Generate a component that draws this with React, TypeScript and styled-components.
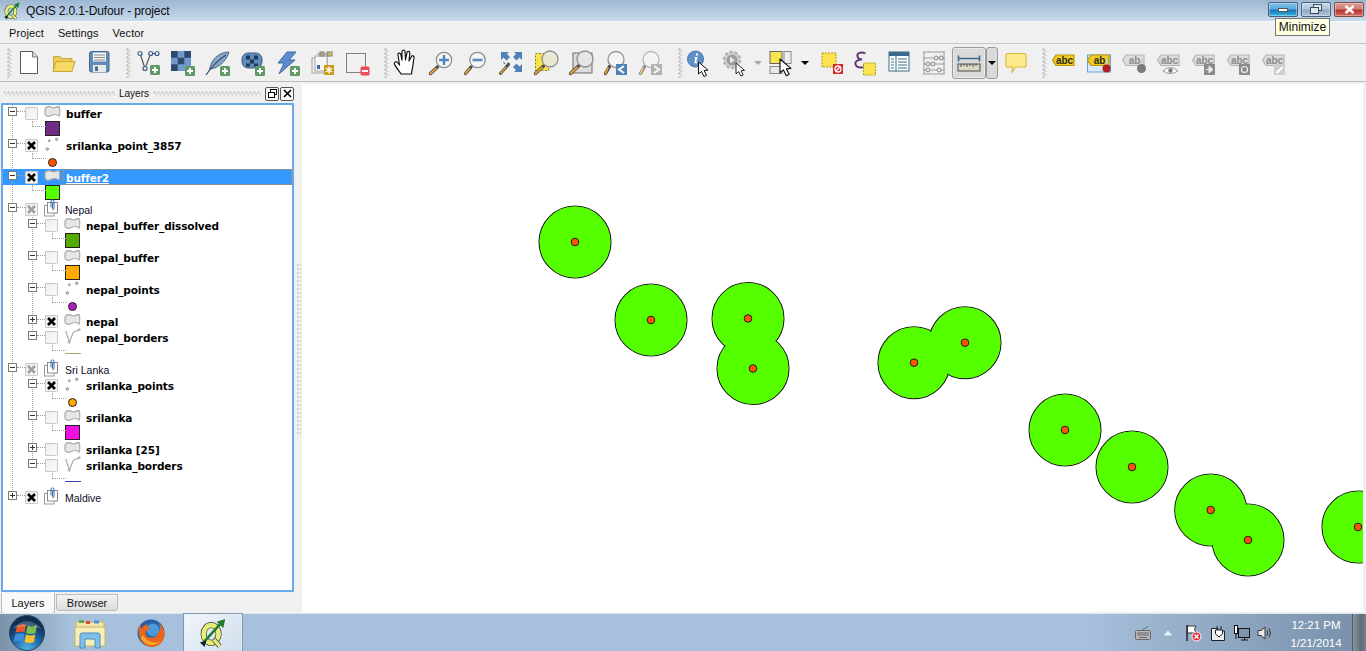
import React from "react";
import styled, { createGlobalStyle } from "styled-components";

const UI_FONT = `"Liberation Sans", Arial, sans-serif`;
const BOLD_FONT = `"DejaVu Sans", Verdana, sans-serif`;

const GlobalStyle = createGlobalStyle`
  html, body { margin: 0; padding: 0; background: #f0f0f0; }
  body { font-family: ${UI_FONT}; overflow: hidden; }
`;

/* ---------- window chrome ---------- */

const Screen = styled.div`
  width: 1366px;
  height: 651px;
  display: flex;
  flex-direction: column;
  overflow: hidden;
  background: #f0f0f0;
  position: relative;
`;

const TitleBar = styled.div`
  height: 21px;
  flex: none;
  display: flex;
  align-items: center;
  padding-left: 3px;
  border-bottom: 1px solid #f6f9fc;
  background: linear-gradient(180deg, #9db7d2 0%, #c9daeb 100%);
`;

const TitleText = styled.span`
  font-size: 12px;
  margin-left: 5px;
  color: #0c0c14;
  letter-spacing: -0.12px;
`;

const WindowButtons = styled.div`
  margin-left: auto;
  margin-right: 2px;
  margin-top: 2px;
  align-self: flex-start;
  display: flex;
  gap: 3px;
`;

const WinButton = styled.div<{ $kind: "min" | "max" | "close" }>`
  width: 30px;
  height: 15px;
  box-sizing: border-box;
  border: 1px solid ${(p) => (p.$kind === "close" ? "#7d4a48" : "#47617c")};
  border-radius: 2px;
  display: flex;
  align-items: center;
  justify-content: center;
  box-shadow: inset 0 0 0 1px rgba(255, 255, 255, 0.35);
  background: ${(p) =>
    p.$kind === "min"
      ? "linear-gradient(180deg,#7cc3ec 0%,#5aa9dc 45%,#1a76b8 55%,#35b3e0 100%)"
      : p.$kind === "max"
      ? "linear-gradient(180deg,#c4d6e8 0%,#b0c6dc 45%,#8ea9c6 55%,#a9c1d8 100%)"
      : "linear-gradient(180deg,#dc9c94 0%,#cf7f76 45%,#b9352c 55%,#cf6d62 100%)"};
`;

const Tooltip = styled.div`
  position: absolute;
  left: 1275px;
  top: 18px;
  width: 55px;
  height: 18px;
  box-sizing: border-box;
  border: 1px solid #767676;
  background: #ffffe1;
  font-size: 12px;
  line-height: 16px;
  text-align: center;
  color: #111;
  z-index: 5;
`;

const MenuBar = styled.div`
  height: 21px;
  flex: none;
  display: flex;
  align-items: center;
  padding-left: 9px;
  gap: 14px;
  font-size: 11px;
  color: #111;
`;

const MenuItem = styled.span`
  letter-spacing: 0.1px;
`;

/* ---------- toolbar ---------- */

const Toolbar = styled.div`
  height: 37px;
  flex: none;
  display: flex;
  align-items: center;
  border-top: 1px solid #c6c6c6;
  border-bottom: 1px solid #bcbcbc;
`;

const GripWrap = styled.div<{ $w: number }>`
  width: ${(p) => p.$w}px;
  height: 30px;
  flex: none;
  display: flex;
  justify-content: flex-end;
`;

const Grip = styled.div`
  width: 5px;
  height: 100%;
  background-image: radial-gradient(circle at 1.5px 1.5px, #c8c8c8 1.2px, transparent 1.5px),
    radial-gradient(circle at 3.5px 3.5px, #d2d2d2 1.1px, transparent 1.4px);
  background-size: 5px 4px;
`;

const ToolButton = styled.div<{ $w: number; $active?: boolean }>`
  width: ${(p) => p.$w}px;
  height: 32px;
  flex: none;
  box-sizing: border-box;
  display: flex;
  align-items: center;
  justify-content: center;
  border-radius: 3px;
  ${(p) =>
    p.$active
      ? "background:#dadada;border:1px solid #9a9a9a;box-shadow:inset 0 0 0 1px #ececec;"
      : ""}
`;

const ArrowSlot = styled.div<{ $w: number; $after?: number; $boxed?: boolean }>`
  width: ${(p) => p.$w}px;
  margin-right: ${(p) => p.$after ?? 0}px;
  height: 32px;
  flex: none;
  box-sizing: border-box;
  display: flex;
  align-items: center;
  justify-content: center;
  ${(p) =>
    p.$boxed ? "background:#dadada;border:1px solid #9a9a9a;border-radius:3px;" : ""}
`;

const Arrow = styled.div<{ $dim?: boolean }>`
  flex: none;
  width: 0;
  height: 0;
  border-left: 4px solid transparent;
  border-right: 4px solid transparent;
  border-top: 4px solid ${(p) => (p.$dim ? "#a9a9a9" : "#000")};
`;

const IconSvg = styled.svg`
  width: 32px;
  height: 32px;
  flex: none;
  overflow: visible;
`;

const Plus = ({ x = 23, y = 23 }: { x?: number; y?: number }) => (
  <g>
    <rect x={x - 5} y={y - 5} width="10" height="10" rx="1.5" fill="#5f9a66" />
    <path d={`M${x - 3} ${y}h6M${x} ${y - 3}v6`} stroke="#fff" strokeWidth="2" />
  </g>
);

const Glass = ({ cx = 19, cy = 13, r = 7.7, fill = "#f6f6f6" }) => (
  <g>
    <path d={`M${cx - 6.5} ${cy + 7}L5.5 26.5`} stroke="#4a4a4a" strokeWidth="3.4" strokeLinecap="round" />
    <path d={`M${cx - 8} ${cy + 8.5}L5.5 26.5`} stroke="#e8a52c" strokeWidth="1.8" strokeLinecap="round" />
    <circle cx={cx} cy={cy} r={r} fill={fill} stroke="#8f8f8f" strokeWidth="1.3" />
  </g>
);

const Cursor = ({ x, y, s = 1 }: { x: number; y: number; s?: number }) => (
  <path
    transform={`translate(${x} ${y}) scale(${s})`}
    d="M0 0L0 12L3 9.5L5.5 14.5L8 13.3L5.6 8.6L9.5 8.2Z"
    fill="#fff"
    stroke="#111"
    strokeWidth="1"
    strokeLinejoin="round"
  />
);

const LabelTag = ({
  text = "abc",
  fill = "#ddd",
  edge = "#b5b5b5",
  ink = "#8a8a8a",
  y = 8,
}) => (
  <g>
    <path d={`M8 ${y}H26V${y + 10.5}H8L4.5 ${y + 5.2}Z`} fill={fill} stroke={edge} strokeWidth="1.2" />
    <text x="16.5" y={y + 8.5} textAnchor="middle" fontFamily={UI_FONT} fontWeight="700" fontSize="10" fill={ink}>
      {text}
    </text>
  </g>
);

const icons: Record<string, React.ReactNode> = {
  new: (
    <>
      <path d="M7.5 4.5H19.5L24.5 10V26.5H7.5Z" fill="#fff" stroke="#585858" />
      <path d="M19.5 4.5V10H24.5" fill="#ddd" stroke="#777" />
    </>
  ),
  open: (
    <>
      <path d="M5.5 23V9.5H12L14 11.5H24V14" fill="#f0cc55" stroke="#c7a63e" />
      <path d="M5 24.5L8 14.5H27L24 24.5Z" fill="#f6d864" stroke="#c7a63e" />
    </>
  ),
  save: (
    <>
      <rect x="6.5" y="4.5" width="19.5" height="20.5" rx="2" fill="#5f8cbb" stroke="#44678d" />
      <rect x="10" y="5.5" width="13" height="9" fill="#f3f3f3" />
      <path d="M11 8h11M11 10.5h11M11 13h11" stroke="#8c8c8c" />
      <rect x="10" y="18" width="13" height="7" fill="#e9e9e9" />
      <rect x="12" y="19.5" width="3" height="4.5" fill="#44678d" />
    </>
  ),
  addVector: (
    <>
      <path d="M8 6.5L13 21.5L18.7 6.5H25" fill="none" stroke="#555" strokeWidth="1.2" />
      <g fill="#e8eef5" stroke="#3e5f86" strokeWidth="1.2">
        <circle cx="8" cy="6.5" r="2" />
        <circle cx="13" cy="21.5" r="2" />
        <circle cx="18.7" cy="6.5" r="2" />
        <circle cx="25" cy="6.5" r="2" />
      </g>
      <Plus />
    </>
  ),
  addRaster: (
    <>
      <rect x="4" y="4" width="20" height="20" fill="#6f9acb" />
      <path d="M4 4h6.7v6.7H4zM17.3 4H24v6.7h-6.7zM10.7 10.7h6.6v6.6h-6.6zM4 17.3h6.7V24H4z" fill="#2e4a6e" />
      <Plus y={24} />
    </>
  ),
  feather: (
    <>
      <path d="M27 5C19 5 11 10 8.5 19L7.5 22C14 22 24 16 27 5Z" fill="#86a7ca" stroke="#4e6f94" />
      <path d="M4 28C8 22 16 13 24 8" fill="none" stroke="#3a4f68" strokeWidth="1.2" />
      <Plus y={24} />
    </>
  ),
  postgis: (
    <>
      <rect x="5" y="6" width="20" height="15" rx="6" fill="#5f8cbb" stroke="#3e5f86" />
      <path d="M9 8.5h4v4H9zM17 8.5h4v4h-4zM13 12.5h4v4h-4zM9 16.5h4v3H9zM17 16.5h4v3h-4z" fill="#223a5a" />
      <Plus y={24} />
    </>
  ),
  wcs: (
    <>
      <path d="M15 5L24 5L17 13L23 13L7 27L12 16L6 16Z" fill="#5f8cd0" stroke="#3f6a9e" strokeLinejoin="round" />
      <Plus y={24} />
    </>
  ),
  wms: (
    <>
      <rect x="5" y="11" width="15" height="15" fill="#efefef" stroke="#a3a3a3" />
      <rect x="8" y="9" width="12" height="15" fill="#f6f6f6" stroke="#a3a3a3" />
      <path d="M10 18h3v4h-3z" fill="#3f6a9e" />
      <rect x="13" y="5" width="4" height="4" fill="#c9d27a" stroke="#777" />
      <rect x="20" y="5" width="5" height="4" fill="#e6d35a" stroke="#777" />
      <path d="M10 7h13" stroke="#888" />
      <rect x="17" y="18" width="10" height="10" rx="1" fill="#cc9a12" />
      <path d="M22 19.5v7M18.8 21l6.4 4M18.8 25l6.4-4" stroke="#fff" strokeWidth="1.4" />
    </>
  ),
  remove: (
    <>
      <rect x="4.5" y="6.5" width="19" height="19" fill="#f0f0f0" stroke="#7f7f7f" />
      <rect x="18.5" y="19.5" width="9" height="9" rx="1.5" fill="#ee4a58" />
      <path d="M20 24h6" stroke="#fff" strokeWidth="2" />
    </>
  ),
  hand: (
    <path
      d="M11 27C9 24 5 19 4.5 17C4 15 6 14 7.5 15.5L9.5 18L8 8C7.6 6 10.3 5.4 10.8 7.4L12 13L12 4.5C12 2.5 15 2.5 15 4.5L15.5 13L17 5.5C17.5 3.7 20 4.2 19.8 6.2L19 14L21.5 9.5C22.5 8 24.5 9 24 11C23 16 23 20 22 23L21.5 27Z"
      fill="#fff"
      stroke="#111"
      strokeWidth="1.2"
      strokeLinejoin="round"
    />
  ),
  zoomIn: (
    <>
      <Glass />
      <path d="M14 13h10M19 8v10" stroke="#4f86bd" strokeWidth="2.4" />
    </>
  ),
  zoomOut: (
    <>
      <Glass cx={17.5} />
      <path d="M12.5 13h10" stroke="#5f8cbb" strokeWidth="2.6" />
    </>
  ),
  zoomFull: (
    <>
      <g fill="#4f82b8">
        <path d="M6 5h8l-2 2 3 3-3.5 3.5-3-3-2.5 2.5z" />
        <path d="M27 5h-8l2 2-3 3 3.5 3.5 3-3 2.5 2.5z" />
        <path d="M27 25h-8l2-2-3-3 3.5-3.5 3 3 2.5-2.5z" />
        <path d="M8 14l2.5 2.5-1.5 1z" />
      </g>
      <path d="M13 18L5.5 26.5" stroke="#4a4a4a" strokeWidth="3" strokeLinecap="round" />
      <path d="M11 20L5.5 26.5" stroke="#e8a52c" strokeWidth="1.6" />
      <circle cx="13.5" cy="17" r="1.6" fill="#555" />
    </>
  ),
  zoomSel: (
    <>
      <rect x="5.5" y="6.5" width="13" height="17" fill="#f8e44a" stroke="#8c7a20" strokeDasharray="2 1.5" />
      <Glass cx={20} cy={12} r={8} fill="#e8e7d2" />
    </>
  ),
  zoomLayer: (
    <>
      <rect x="8" y="6" width="19" height="20" fill="#dcdcdc" stroke="#6b6b6b" />
      <Glass cx={20} cy={12} r={8} fill="#e6e6e8" />
    </>
  ),
  zoomLast: (
    <>
      <Glass cx={16} cy={12.5} r={8} />
      <rect x="16" y="17" width="11" height="11" fill="#4f82b8" />
      <path d="M24 19L19 22.5L24 26" fill="none" stroke="#fff" strokeWidth="2" />
    </>
  ),
  zoomNext: (
    <g opacity="0.6">
      <Glass cx={16} cy={12.5} r={8} />
      <rect x="16" y="17" width="11" height="11" fill="#8a8a8a" />
      <path d="M19 19L24 22.5L19 26" fill="none" stroke="#fff" strokeWidth="2" />
    </g>
  ),
  identify: (
    <>
      <circle cx="11.5" cy="12" r="8" fill="#5f8fc6" stroke="#4a78ac" />
      <path d="M12 6.5h2v2h-2zM11 10h2.5l-1.2 5h1l-.3 1.2H10.2l1.1-5H10.4z" fill="#fff" />
      <Cursor x={14.5} y={15} />
    </>
  ),
  action: (
    <>
      <circle cx="12" cy="13" r="8" fill="#d4d4d4" stroke="#b0b0b0" strokeWidth="2.4" strokeDasharray="3.2 1.8" />
      <circle cx="12" cy="13" r="5.5" fill="#9d9d9d" />
      <path d="M10 10L15 13L10 16Z" fill="#ececec" />
      <Cursor x={16} y={16} s={0.9} />
    </>
  ),
  select: (
    <>
      <rect x="4" y="4.5" width="12" height="12" fill="#fbe44f" stroke="#666" />
      <rect x="18" y="4.5" width="7" height="12" fill="#eee" stroke="#888" />
      <rect x="4" y="19.5" width="12" height="7" fill="#e6e6e6" stroke="#888" />
      <Cursor x={14} y={12} s={1.15} />
    </>
  ),
  deselect: (
    <>
      <rect x="6" y="6" width="14" height="14" fill="#fbe44f" stroke="#b39a20" strokeDasharray="2 1" />
      <rect x="17" y="17" width="10" height="10" fill="#d8242c" />
      <circle cx="22" cy="22" r="3" fill="none" stroke="#fff" strokeWidth="1.3" />
      <path d="M20 24l4-4" stroke="#fff" strokeWidth="1.3" />
    </>
  ),
  expression: (
    <>
      <path d="M15.5 6.5C11 4.5 6.5 6 7.5 9.5C8 11.5 9.5 12.5 12 12.5C8.5 12.5 4.5 14 5.5 17.5C6.5 21 12 21 15.5 19.5" fill="none" stroke="#61366f" strokeWidth="1.9" />
      <rect x="13.5" y="16" width="12" height="12" fill="#fbe44f" stroke="#b39a20" strokeDasharray="2 1" />
    </>
  ),
  table: (
    <>
      <rect x="5" y="5" width="20" height="19" fill="#fff" stroke="#3d6a8c" />
      <rect x="5" y="5" width="20" height="4" fill="#3d6a8c" />
      <path d="M12 9v15M7 12h3M14 12h9M7 15h3M14 15h9M7 18h3M14 18h9M7 21h3M14 21h9" stroke="#3d6a8c" />
    </>
  ),
  abacus: (
    <>
      <path d="M6 5v22M26 5v22M5 5h22M5 27h22M5 11h22M5 17h22M5 23h22" stroke="#9a9a9a" fill="none" />
      <g fill="#e8e8e8" stroke="#8a8a8a">
        <circle cx="18" cy="11" r="2" />
        <circle cx="23" cy="11" r="2" />
        <circle cx="10" cy="17" r="2" />
        <circle cx="15" cy="17" r="2" />
        <circle cx="10" cy="23" r="2" />
        <circle cx="21" cy="23" r="2" />
      </g>
    </>
  ),
  measure: (
    <>
      <path d="M5 11.5h22M5.5 8.5v6M26.5 8.5v6" stroke="#3d6a8c" strokeWidth="1.6" fill="none" />
      <rect x="5" y="17" width="22" height="7" fill="#dcd7c6" stroke="#4b4b4b" />
      <path d="M8 17v3M11 17v2M14 17v3M17 17v2M20 17v3M23 17v2" stroke="#4b4b4b" />
    </>
  ),
  speech: (
    <path
      d="M8 6.5H24Q26 6.5 26 8.5V18Q26 20 24 20H15.5L12 25L12.5 20H8Q6 20 6 18V8.5Q6 6.5 8 6.5Z"
      fill="#fdeb8e"
      stroke="#d9b93c"
      strokeWidth="1.2"
    />
  ),
  label: <LabelTag fill="#f1cc20" edge="#b8960e" ink="#2b2b20" y={8} />,
  labelPin: (
    <>
      <rect x="4.5" y="8" width="23" height="17" fill="#d8e8f8" stroke="#6aa0e0" />
      <LabelTag text="ab" fill="#f1cc20" edge="#b8960e" ink="#2b2b20" y={8} />
      <path d="M23.5 12v7" stroke="#c9c9c9" strokeWidth="2" />
      <circle cx="23.5" cy="21.5" r="4" fill="#b01c24" />
    </>
  ),
  labelMove: (
    <>
      <LabelTag text="ab" />
      <path d="M23.5 12v7" stroke="#c9c9c9" strokeWidth="2" />
      <circle cx="23.5" cy="21.5" r="4.5" fill="#7b7b7b" />
    </>
  ),
  labelEye: (
    <>
      <LabelTag />
      <path d="M10 24Q17 17 25 24Q17 29 10 24Z" fill="#fff" stroke="#9a9a9a" />
      <circle cx="17.5" cy="23.5" r="2.2" fill="#777" />
    </>
  ),
  labelMoveBox: (
    <>
      <LabelTag />
      <rect x="16" y="17" width="11" height="11" fill="#8b8b8b" />
      <path d="M18 22.5h4M21 19l4 3.5-4 3.5z" fill="#eee" stroke="#eee" />
    </>
  ),
  labelRotate: (
    <>
      <LabelTag />
      <rect x="16" y="17" width="11" height="11" fill="#8b8b8b" />
      <circle cx="21.5" cy="22.5" r="3" fill="none" stroke="#eee" strokeWidth="1.2" />
    </>
  ),
  labelEdit: (
    <>
      <LabelTag />
      <rect x="16" y="17" width="11" height="11" fill="#cfcfcf" />
      <path d="M18.5 26L24.5 20" stroke="#fff" strokeWidth="2" />
    </>
  ),
};

const Tool = ({ name }: { name: string }) => <IconSvg viewBox="0 0 32 32">{icons[name]}</IconSvg>;

type ToolItem =
  | { grip: number }
  | { arrow: number; after?: number; dim?: boolean; boxed?: boolean }
  | { icon: string; w?: number; active?: boolean };

const toolItems: ToolItem[] = [
  { grip: 11.5 },
  { icon: "new" },
  { icon: "open" },
  { icon: "save" },
  { grip: 14 },
  { icon: "addVector" },
  { icon: "addRaster" },
  { icon: "feather" },
  { icon: "postgis" },
  { icon: "wcs" },
  { icon: "wms" },
  { icon: "remove" },
  { grip: 13 },
  { icon: "hand" },
  { icon: "zoomIn" },
  { icon: "zoomOut" },
  { icon: "zoomFull" },
  { icon: "zoomSel" },
  { icon: "zoomLayer" },
  { icon: "zoomLast" },
  { icon: "zoomNext" },
  { grip: 14 },
  { icon: "identify" },
  { icon: "action", w: 36 },
  { arrow: 8, dim: true },
  { icon: "select", w: 40 },
  { arrow: 6, after: 8 },
  { icon: "deselect", w: 33 },
  { icon: "expression" },
  { icon: "table", w: 32 },
  { icon: "abacus", w: 36 },
  { icon: "measure", w: 34, active: true },
  { arrow: 12, boxed: true },
  { icon: "speech", w: 37 },
  { grip: 12 },
  { icon: "label" },
  { icon: "labelPin" },
  { icon: "labelMove" },
  { icon: "labelEye" },
  { icon: "labelMoveBox" },
  { icon: "labelRotate" },
  { icon: "labelEdit" },
];

/* ---------- layer tree ---------- */

const Main = styled.div`
  flex: 1;
  min-height: 0;
  display: flex;
`;

const LeftColumn = styled.div`
  width: 293px;
  margin-left: 1px;
  flex: none;
  display: flex;
  flex-direction: column;
  padding-top: 2px;
`;

const DockHeader = styled.div`
  height: 19px;
  flex: none;
  display: flex;
  align-items: center;
  gap: 4px;
  padding-left: 2px;
  padding-right: 2px;
  font-size: 10px;
  color: #111;
`;

const DockTitle = styled.span`
  width: 30px;
  text-align: center;
`;

const DockGrip = styled.div<{ $w: number }>`
  width: ${(p) => p.$w}px;
  height: 5px;
  flex: none;
  background-image: radial-gradient(circle at 1.5px 1.5px, #cfcfcf 1px, transparent 1.4px),
    radial-gradient(circle at 3.5px 3.5px, #d8d8d8 1px, transparent 1.4px);
  background-size: 4px 5px;
`;

const DockButtons = styled.div`
  margin-left: auto;
  display: flex;
  gap: 1px;
`;

const DockButton = styled.div`
  width: 14px;
  height: 14px;
  flex: none;
  box-sizing: border-box;
  border: 1px solid #555;
  border-radius: 2px;
  background: #f7f7f7;
  display: flex;
  align-items: center;
  justify-content: center;
`;

const TreeBox = styled.div`
  flex: 1;
  min-height: 0;
  box-sizing: border-box;
  border: 2px solid #68a7ea;
  border-radius: 1px;
  background: #fff;
`;

const Row = styled.div<{ $selected?: boolean }>`
  height: 16px;
  display: flex;
  align-items: center;
  background: ${(p) => (p.$selected ? "#3399ff" : "transparent")};
`;

const Guide = styled.div<{ $on: boolean }>`
  width: 20px;
  flex: none;
  align-self: stretch;
  box-sizing: border-box;
  background-image: ${(p) =>
    p.$on ? "linear-gradient(#a0a0a0 50%, transparent 50%)" : "none"};
  background-size: 1px 2px;
  background-repeat: repeat-y;
  background-position: 9px 0;
`;

const ExpanderCell = styled.div<{ $line: "full" | "top" }>`
  width: 22px;
  flex: none;
  align-self: stretch;
  display: flex;
  align-items: center;
  padding-left: 5px;
  box-sizing: border-box;
  position: relative;
  &::before {
    content: "";
    position: absolute;
    left: 9px;
    top: 0;
    width: 1px;
    height: ${(p) => (p.$line === "full" ? "100%" : "50%")};
    background-image: linear-gradient(#a0a0a0 50%, transparent 50%);
    background-size: 1px 2px;
  }
`;

const Expander = styled.div`
  width: 9px;
  height: 9px;
  margin-top: -3px;
  flex: none;
  box-sizing: border-box;
  border: 1px solid #7a7a7a;
  background: #fff;
  display: flex;
  align-items: center;
  justify-content: center;
  position: relative;
`;

const Stub = styled.div`
  flex: 1;
  height: 0;
  margin-top: -3px;
  border-top: 1px dotted #a0a0a0;
`;

const CheckBox = styled.div`
  width: 13px;
  height: 13px;
  flex: none;
  box-sizing: border-box;
  border: 1px solid #c9c9c9;
  border-radius: 1px;
  background: linear-gradient(135deg, #ececec, #fbfbfb);
  display: flex;
  align-items: center;
  justify-content: center;
`;

const LayerIcon = styled.svg`
  width: 16px;
  height: 14px;
  margin-left: 6px;
  margin-top: -2px;
  flex: none;
  overflow: visible;
`;

const LayerName = styled.div<{ $bold?: boolean; $selected?: boolean }>`
  margin-left: ${(p) => (p.$selected ? 3 : p.$bold ? 6 : 5)}px;
  margin-top: ${(p) => (p.$selected ? 0 : 2)}px;
  padding-left: ${(p) => (p.$selected ? 3 : 0)}px;
  font-family: ${(p) => (p.$bold ? BOLD_FONT : UI_FONT)};
  font-size: 10.5px;
  line-height: 14px;
  font-weight: ${(p) => (p.$bold ? 700 : 400)};
  letter-spacing: ${(p) => (p.$bold ? "-0.12px" : "0")};
  color: ${(p) => (p.$selected ? "#fff" : p.$bold ? "#000" : "#0c0c2a")};
  ${(p) =>
    p.$selected
      ? "flex:1;align-self:stretch;outline:1px dotted #e08a30;outline-offset:-1px;padding-top:2px;text-decoration:underline;"
      : ""}
`;

const Elbow = styled.div`
  width: 22px;
  flex: none;
  align-self: stretch;
  position: relative;
  &::before {
    content: "";
    position: absolute;
    left: 9px;
    top: 0;
    width: 13px;
    height: 5px;
    border-left: 1px dotted #a0a0a0;
    border-bottom: 1px dotted #a0a0a0;
  }
`;

const SymbolSquare = styled.div<{ $color: string }>`
  width: 15px;
  height: 15px;
  margin-top: -1px;
  flex: none;
  box-sizing: border-box;
  border: 1px solid #222;
  background: ${(p) => p.$color};
`;

const SymbolDot = styled.div<{ $color: string }>`
  width: 9px;
  height: 9px;
  margin-left: 3px;
  margin-top: 2px;
  flex: none;
  box-sizing: border-box;
  border: 1px solid #222;
  border-radius: 50%;
  background: ${(p) => p.$color};
`;

const SymbolLine = styled.div<{ $color: string }>`
  width: 16px;
  height: 1px;
  flex: none;
  background: ${(p) => p.$color};
`;

const PolyIcon = () => (
  <LayerIcon viewBox="0 0 16 14">
    <path
      d="M1 4C2.5 1 5 1 8 2.5C11 4 13 1 15 1.5C15.8 4 15.8 9 15 11C13 9.5 10 9 7 10.5C4 12 2 11.5 1 9Z"
      fill="#e6e6e6"
      stroke="#a8a8a8"
      strokeWidth="1.2"
    />
  </LayerIcon>
);

const PointIcon = () => (
  <LayerIcon viewBox="0 0 16 14">
    <g fill="#d8d8d8" stroke="#777" strokeWidth="0.8">
      <circle cx="3.3" cy="12" r="1.2" />
      <circle cx="5.3" cy="3.7" r="0.9" />
      <circle cx="12.7" cy="2.3" r="1.2" />
    </g>
  </LayerIcon>
);

const LineIcon = () => (
  <LayerIcon viewBox="0 0 16 14">
    <path d="M1.7 1.7L5.3 13.3L9.3 3.3L15.3 0.7" fill="none" stroke="#a5a5a5" strokeWidth="1.1" />
    <g fill="#ddd" stroke="#888" strokeWidth="0.6">
      <circle cx="5.3" cy="13.3" r="1" />
      <circle cx="15.3" cy="0.7" r="1" />
    </g>
  </LayerIcon>
);

const GroupIcon = () => (
  <LayerIcon viewBox="0 0 16 14">
    <rect x="0.5" y="4.5" width="9.5" height="10.5" fill="#fff" stroke="#999" />
    <rect x="3.5" y="1.5" width="10" height="10.5" fill="#fff" stroke="#8a8a8a" />
    <path d="M7 6.5V0C7-1.5 10-1.5 10 0V7.5C10 9 8.5 9 8.5 7.5V1.5" fill="none" stroke="#3f6ea8" />
  </LayerIcon>
);

const CrossMark = ({ muted }: { muted?: boolean }) => (
  <svg width="9" height="9" viewBox="0 0 9 9">
    <path d="M1 1L8 8M8 1L1 8" stroke={muted ? "#9f9f9f" : "#000"} strokeWidth="2.6" />
  </svg>
);

type Legend = { kind: "square" | "dot" | "line"; color: string };
type Layer = {
  depth: 0 | 1;
  name: string;
  check: "off" | "on" | "mixed";
  icon: "poly" | "point" | "line" | "group";
  plus?: boolean;
  selected?: boolean;
  last?: boolean;
  legend?: Legend;
};

const layers: Layer[] = [
  { depth: 0, name: "buffer", check: "off", icon: "poly", legend: { kind: "square", color: "#722b85" } },
  { depth: 0, name: "srilanka_point_3857", check: "on", icon: "point", legend: { kind: "dot", color: "#ff5500" } },
  { depth: 0, name: "buffer2", check: "on", icon: "poly", selected: true, legend: { kind: "square", color: "#55ff00" } },
  { depth: 0, name: "Nepal", check: "mixed", icon: "group" },
  { depth: 1, name: "nepal_buffer_dissolved", check: "off", icon: "poly", legend: { kind: "square", color: "#55aa00" } },
  { depth: 1, name: "nepal_buffer", check: "off", icon: "poly", legend: { kind: "square", color: "#ffaa00" } },
  { depth: 1, name: "nepal_points", check: "off", icon: "point", legend: { kind: "dot", color: "#aa22bb" } },
  { depth: 1, name: "nepal", check: "on", icon: "poly", plus: true },
  { depth: 1, name: "nepal_borders", check: "off", icon: "line", last: true, legend: { kind: "line", color: "#a0b070" } },
  { depth: 0, name: "Sri Lanka", check: "mixed", icon: "group" },
  { depth: 1, name: "srilanka_points", check: "on", icon: "point", legend: { kind: "dot", color: "#ffaa00" } },
  { depth: 1, name: "srilanka", check: "off", icon: "poly", legend: { kind: "square", color: "#f010e0" } },
  { depth: 1, name: "srilanka [25]", check: "off", icon: "poly", plus: true },
  { depth: 1, name: "srilanka_borders", check: "off", icon: "line", last: true, legend: { kind: "line", color: "#4040b0" } },
  { depth: 0, name: "Maldive", check: "on", icon: "group", plus: true, last: true },
];

const LayerRows = ({ layer }: { layer: Layer }) => {
  const isGroup = layer.icon === "group";
  return (
    <>
      <Row $selected={layer.selected}>
        {layer.depth === 1 && <Guide $on />}
        <ExpanderCell $line={layer.last ? "top" : "full"}>
          <Expander>
            <svg width="7" height="7" viewBox="0 0 7 7">
              <path d={layer.plus ? "M1 3.5h5M3.5 1v5" : "M1 3.5h5"} stroke="#333" />
            </svg>
          </Expander>
          <Stub />
        </ExpanderCell>
        <CheckBox>
          {layer.check === "on" && <CrossMark />}
          {layer.check === "mixed" && <CrossMark muted />}
        </CheckBox>
        {layer.icon === "poly" && <PolyIcon />}
        {layer.icon === "point" && <PointIcon />}
        {layer.icon === "line" && <LineIcon />}
        {isGroup && <GroupIcon />}
        <LayerName $bold={!isGroup} $selected={layer.selected}>
          {layer.name}
        </LayerName>
      </Row>
      {layer.legend && (
        <Row>
          <Guide $on />
          {layer.depth === 1 && <Guide $on={!layer.last} />}
          <Elbow />
          {layer.legend.kind === "square" && <SymbolSquare $color={layer.legend.color} />}
          {layer.legend.kind === "dot" && <SymbolDot $color={layer.legend.color} />}
          {layer.legend.kind === "line" && <SymbolLine $color={layer.legend.color} />}
        </Row>
      )}
    </>
  );
};

const TabRow = styled.div`
  height: 21px;
  flex: none;
  display: flex;
  align-items: flex-start;
  gap: 1px;
`;

const Tab = styled.div<{ $active?: boolean }>`
  box-sizing: border-box;
  font-size: 11px;
  display: flex;
  align-items: center;
  justify-content: center;
  color: #111;
  border: 1px solid #bcbcbc;
  border-radius: 0 0 3px 3px;
  ${(p) =>
    p.$active
      ? "width:54px;height:21px;margin-top:1px;background:#f9f9f9;border-top:none;"
      : "width:62px;height:17px;margin-top:2px;background:linear-gradient(180deg,#f3f3f3,#dcdcdc);"}
`;

const Splitter = styled.div`
  width: 8px;
  flex: none;
  display: flex;
  align-items: center;
  justify-content: center;
  padding-top: 2px;
`;

const SplitterGrip = styled.div`
  width: 4px;
  height: 170px;
  margin-left: 2px;
  background-image: radial-gradient(circle at 1px 1px, #d4d4d4 1px, transparent 1.3px);
  background-size: 3px 4px;
`;

/* ---------- map ---------- */

const MapCanvas = styled.svg`
  flex: 1;
  min-width: 0;
  height: 528px;
  margin-top: 2px;
  margin-right: 3px;
  background: #fff;
  display: block;
`;

const buffers: [number, number][] = [
  [575, 242],
  [651, 320],
  [748, 318.5],
  [753, 368.5],
  [914, 362.7],
  [965, 342.7],
  [1065, 430],
  [1132, 467],
  [1210.7, 510],
  [1248, 540],
  [1358, 527],
];

/* ---------- taskbar ---------- */

const Taskbar = styled.div`
  height: 38px;
  flex: none;
  box-sizing: border-box;
  display: flex;
  align-items: center;
  border-top: 1px solid #dfe7ef;
  background: linear-gradient(90deg, #7c92aa 0, #a7c0db 70px, #a7c0db 1085px, #7a92ac 1350px);
`;

const TaskSlot = styled.div<{ $w: number; $active?: boolean }>`
  width: ${(p) => p.$w}px;
  height: 37px;
  flex: none;
  box-sizing: border-box;
  display: flex;
  align-items: center;
  justify-content: center;
  ${(p) =>
    p.$active
      ? "margin-left:8px;background:linear-gradient(135deg,#f2f6fa,#cfdceb);border:1px solid #e8eef5;border-bottom:none;box-shadow:0 0 0 1px #7f98b3;"
      : ""}
`;

const Tray = styled.div`
  margin-left: auto;
  display: flex;
  align-items: center;
  height: 100%;
`;

const TraySlot = styled.div<{ $w: number }>`
  width: ${(p) => p.$w}px;
  flex: none;
  display: flex;
  justify-content: center;
`;

const Clock = styled.div`
  width: 72px;
  margin-left: 4px;
  padding-top: 2px;
  flex: none;
  color: #fff;
  font-size: 11.5px;
  line-height: 18px;
  text-align: center;
`;

const ShowDesktop = styled.div`
  width: 14px;
  height: 100%;
  flex: none;
  box-sizing: border-box;
  border-left: 1px solid #4c5c6c;
  background: linear-gradient(90deg, #8a96a2, #5f6c78 60%, #76838f);
`;

const QgisLogo = ({ size }: { size: number }) => (
  <svg width={size} height={size} viewBox="0 0 32 32">
    <ellipse cx="14" cy="17" rx="8" ry="9.5" fill="none" stroke="#333" strokeWidth="6.4" />
    <ellipse cx="14" cy="17" rx="8" ry="9.5" fill="none" stroke="#e6ee7a" strokeWidth="5" />
    <path d="M17 23L23 30" stroke="#333" strokeWidth="5" />
    <path d="M17 23L23 30" stroke="#e6ee7a" strokeWidth="3.6" />
    <path d="M6 26L24 6" stroke="#1f7a2c" strokeWidth="2.6" />
    <path d="M20 4L29 1L27 11Z" fill="#1f7a2c" />
    <path d="M2 26L9 24L7 31Z" fill="#123" />
  </svg>
);

const WindowsOrb = () => (
  <svg width="36" height="36" viewBox="0 0 36 36">
    <defs>
      <radialGradient id="orb" cx="50%" cy="95%" r="75%">
        <stop offset="0" stopColor="#4fb4e8" />
        <stop offset="0.6" stopColor="#1a5f9c" />
        <stop offset="1" stopColor="#0d2d52" />
      </radialGradient>
    </defs>
    <circle cx="18" cy="18" r="17.5" fill="url(#orb)" stroke="#2b4560" />
    <path d="M8 11Q13 8 17 10L15.5 17.5Q11 16 6.5 18Z" fill="#e8582c" />
    <path d="M18.5 10.5Q23 13 28 10L26.5 18Q22 20 17.2 18Z" fill="#7cc04a" />
    <path d="M6.2 19.5Q11 17.5 15.2 19L14 26.5Q10 25 4.8 27Z" fill="#3f8fe0" />
    <path d="M16.9 19.5Q22 21.5 26.2 19.5L25 27Q20 29 15.6 27Z" fill="#f4c22c" />
    <path d="M3 14Q18 -2 33 14Q18 8 3 14Z" fill="#fff" opacity="0.22" />
  </svg>
);

const ExplorerIcon = () => (
  <svg width="32" height="32" viewBox="0 0 32 32">
    <path d="M2 5H30V26H2Z" fill="#f3e6a8" stroke="#c8b46a" />
    <rect x="5" y="3" width="5" height="3" fill="#5cad4a" />
    <rect x="12" y="4" width="4" height="3" fill="#d84a3a" />
    <rect x="20" y="3.5" width="5" height="3" fill="#4a90d8" />
    <path d="M1 10H31V29H1Z" fill="#f8eeb8" stroke="#c8b46a" />
    <path d="M6 31V18Q6 16 8 16H24Q26 16 26 18V31H21V22H11V31Z" fill="#7fc0ea" stroke="#4a8cc0" />
  </svg>
);

const FirefoxIcon = () => (
  <svg width="30" height="30" viewBox="0 0 30 30">
    <circle cx="15" cy="15" r="13.5" fill="#2a5fa8" />
    <circle cx="17" cy="12" r="6.5" fill="#4a9ad8" />
    <path d="M3 9C1 20 8 29 16 29C24 29 29 22 28.5 15C27 9 25 7 23 5C25 10 24 13 22 15C21 19 16 21 12 19C9 17 9 14 11 12C13 12 14 11 14 10C11 9 11 8 12 6C8 7 6 9 6 11C5 10 4 9 5 6C4 7 3.5 8 3 9Z" fill="#e8671c" />
    <path d="M5 20C8 27 18 30 25 23C20 26 11 25 7 17Z" fill="#f4a82c" />
  </svg>
);

const TrayIcon = ({ children }: { children?: React.ReactNode }) => (
  <svg width="18" height="18" viewBox="0 0 18 18">
    {children}
  </svg>
);

export default function App() {
  return (
    <Screen>
      <GlobalStyle />
      <TitleBar>
        <QgisLogo size={18} />
        <TitleText>QGIS 2.0.1-Dufour - project</TitleText>
        <WindowButtons>
          <WinButton $kind="min">
            <svg width="10" height="4">
              <rect x="0.5" y="0.5" width="9" height="3" fill="#fff" stroke="#555" />
            </svg>
          </WinButton>
          <WinButton $kind="max">
            <svg width="12" height="11">
              <rect x="3.5" y="0.5" width="8" height="6" fill="#dfe8f1" stroke="#3b4b5b" />
              <rect x="0.5" y="3.5" width="8" height="6" fill="#dfe8f1" stroke="#3b4b5b" />
            </svg>
          </WinButton>
          <WinButton $kind="close">
            <svg width="11" height="9">
              <path d="M1.5 1L9.5 8M9.5 1L1.5 8" stroke="#fff" strokeWidth="2.4" />
            </svg>
          </WinButton>
        </WindowButtons>
      </TitleBar>
      <Tooltip>Minimize</Tooltip>
      <MenuBar>
        <MenuItem>Project</MenuItem>
        <MenuItem>Settings</MenuItem>
        <MenuItem>Vector</MenuItem>
      </MenuBar>
      <Toolbar>
        {toolItems.map((item, i) => {
          if ("grip" in item) {
            return (
              <GripWrap key={i} $w={item.grip}>
                <Grip />
              </GripWrap>
            );
          }
          if ("arrow" in item) {
            return (
              <ArrowSlot key={i} $w={item.arrow} $after={item.after} $boxed={item.boxed}>
                <Arrow $dim={item.dim} />
              </ArrowSlot>
            );
          }
          return (
            <ToolButton key={i} $w={item.w ?? 35} $active={item.active}>
              <Tool name={item.icon} />
            </ToolButton>
          );
        })}
      </Toolbar>
      <Main>
        <LeftColumn>
          <DockHeader>
            <DockGrip $w={112} />
            <DockTitle>Layers</DockTitle>
            <DockGrip $w={108} />
            <DockButtons>
              <DockButton>
                <svg width="9" height="9">
                  <rect x="2.5" y="0.5" width="6" height="5" fill="#fff" stroke="#000" />
                  <rect x="0.5" y="3.5" width="6" height="5" fill="#fff" stroke="#000" />
                </svg>
              </DockButton>
              <DockButton>
                <svg width="9" height="9">
                  <path d="M1 1L8 8M8 1L1 8" stroke="#000" strokeWidth="1.6" />
                </svg>
              </DockButton>
            </DockButtons>
          </DockHeader>
          <TreeBox>
            {layers.map((layer) => (
              <LayerRows key={layer.name} layer={layer} />
            ))}
          </TreeBox>
          <TabRow>
            <Tab $active>Layers</Tab>
            <Tab>Browser</Tab>
          </TabRow>
        </LeftColumn>
        <Splitter>
          <SplitterGrip />
        </Splitter>
        <MapCanvas viewBox="302 84 1061 528">
          {buffers.map(([x, y]) => (
            <circle key={`o${x}`} cx={x} cy={y} r="36" fill="#55ff00" stroke="#1c1c1c" strokeWidth="1.1" />
          ))}
          {buffers.map(([x, y]) => (
            <circle key={`f${x}`} cx={x} cy={y} r="35.4" fill="#55ff00" />
          ))}
          {buffers.map(([x, y]) => (
            <circle key={`p${x}`} cx={x} cy={y} r="3.8" fill="#ff5500" stroke="#1c1c1c" strokeWidth="1" />
          ))}
        </MapCanvas>
      </Main>
      <Taskbar>
        <TaskSlot $w={54}>
          <WindowsOrb />
        </TaskSlot>
        <TaskSlot $w={72}>
          <ExplorerIcon />
        </TaskSlot>
        <TaskSlot $w={50}>
          <FirefoxIcon />
        </TaskSlot>
        <TaskSlot $w={58} $active>
          <QgisLogo size={30} />
        </TaskSlot>
        <Tray>
          <TraySlot $w={26}>
            <TrayIcon>
              <rect x="1.5" y="6.5" width="15" height="9" rx="1" fill="#b8b8b8" stroke="#666" />
              <path d="M3 9h12M3 11h12M5 13.5h8" stroke="#666" />
              <path d="M9 6C9 4 12 5 14 2" fill="none" stroke="#666" />
            </TrayIcon>
          </TraySlot>
          <TraySlot $w={24}>
            <svg width="10" height="6">
              <path d="M5 0.5L9.5 5.5H0.5Z" fill="#e8eef5" />
            </svg>
          </TraySlot>
          <TraySlot $w={25}>
            <TrayIcon>
              <path d="M3 1v16" stroke="#222" strokeWidth="1.5" />
              <path d="M3.5 2H12L10.5 5.5L12 9H3.5Z" fill="#fff" stroke="#333" />
              <circle cx="12.5" cy="12.5" r="4.5" fill="#e0323c" stroke="#fff" />
              <path d="M10.5 10.5l4 4M14.5 10.5l-4 4" stroke="#fff" strokeWidth="1.4" />
            </TrayIcon>
          </TraySlot>
          <TraySlot $w={25}>
            <TrayIcon>
              <path d="M2.5 4.5H9V7H15.5V16.5H2.5Z" fill="#eee" stroke="#222" />
              <path d="M8 2v4M12 2v4M6.5 6H13.5V10L10 13L6.5 10Z" fill="#fff" stroke="#222" />
            </TrayIcon>
          </TraySlot>
          <TraySlot $w={24}>
            <TrayIcon>
              <rect x="5.5" y="4.5" width="11" height="9" fill="#7f95ad" stroke="#111" />
              <path d="M8 16h7M11.5 13.5V16" stroke="#111" />
              <rect x="1.5" y="1.5" width="3" height="8" fill="#fff" stroke="#111" />
              <path d="M3 9.5V15" stroke="#111" />
            </TrayIcon>
          </TraySlot>
          <TraySlot $w={22}>
            <TrayIcon>
              <path d="M2 6.5H5L9 3V15L5 11.5H2Z" fill="#e8e8e8" stroke="#333" />
              <path d="M11 6.5Q12.5 9 11 11.5M13 4.5Q16 9 13 13.5" fill="none" stroke="#333" />
            </TrayIcon>
          </TraySlot>
          <Clock>
            12:21 PM
            <br />
            1/21/2014
          </Clock>
          <ShowDesktop />
        </Tray>
      </Taskbar>
    </Screen>
  );
}
